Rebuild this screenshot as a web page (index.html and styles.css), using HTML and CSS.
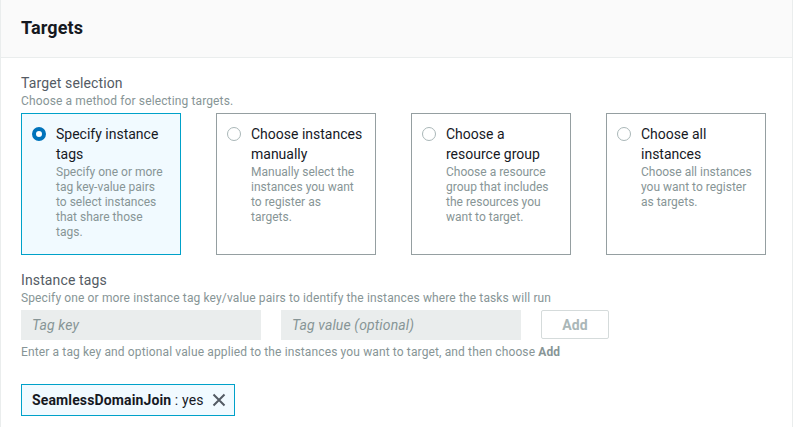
FILE: index.html
```html
<!DOCTYPE html>
<html lang="en">
<head>
<meta charset="utf-8">
<title>Targets</title>
<link rel="stylesheet" href="styles.css">
</head>
<body>
<div class="card">
  <div class="card-header"><h2 class="card-title">Targets</h2></div>
  <div class="card-body">
    <div class="field">
      <div class="label">Target selection</div>
      <div class="hint">Choose a method for selecting targets.</div>
      <div class="tiles">
        <div class="tile tile-selected">
          <span class="radio radio-on"></span>
          <div class="tile-text">
            <div class="tile-title">Specify instance tags</div>
            <div class="tile-desc">Specify one or more tag key-value pairs to select instances that share those tags.</div>
          </div>
        </div>
        <div class="tile">
          <span class="radio"></span>
          <div class="tile-text">
            <div class="tile-title">Choose instances manually</div>
            <div class="tile-desc">Manually select the instances you want to register as targets.</div>
          </div>
        </div>
        <div class="tile">
          <span class="radio"></span>
          <div class="tile-text">
            <div class="tile-title">Choose a resource group</div>
            <div class="tile-desc">Choose a resource group that includes the resources you want to target.</div>
          </div>
        </div>
        <div class="tile">
          <span class="radio"></span>
          <div class="tile-text">
            <div class="tile-title">Choose all instances</div>
            <div class="tile-desc">Choose all instances you want to register as targets.</div>
          </div>
        </div>
      </div>
    </div>
    <div class="field field-tags">
      <div class="label">Instance tags</div>
      <div class="hint">Specify one or more instance tag key/value pairs to identify the instances where the tasks will run</div>
      <div class="tag-row">
        <input class="input" type="text" placeholder="Tag key">
        <input class="input" type="text" placeholder="Tag value (optional)">
        <button class="btn" type="button">Add</button>
      </div>
      <div class="hint hint-after">Enter a tag key and optional value applied to the instances you want to target, and then choose <b>Add</b></div>
      <div class="tokens">
        <div class="token">
          <span class="token-text"><b>SeamlessDomainJoin</b> : yes</span>
          <svg class="token-x" width="14" height="14" viewBox="0 0 14 14" aria-hidden="true"><path d="M1.5 1.5 L12.5 12.5 M12.5 1.5 L1.5 12.5" stroke="#545b64" stroke-width="2" fill="none"/></svg>
        </div>
      </div>
    </div>
  </div>
</div>
</body>
</html>
```
FILE: styles.css
```css
* { box-sizing: border-box; }
html, body { margin: 0; padding: 0; background: #fff; }
body {
  font-family: Roboto, "Liberation Sans", Arial, sans-serif;
  letter-spacing: 0.13px;
  color: #16191f;
  width: 793px;
  height: 427px;
  overflow: hidden;
}
.card {
  border-left: 1px solid #eaeded;
  border-right: 1px solid #eaeded;
  min-height: 427px;
}
.card-header {
  background: #fafafa;
  border-bottom: 1px solid #eaeded;
  height: 58px;
  padding: 17px 20px 0;
}
.card-title {
  margin: 0;
  font-size: 18px;
  line-height: 22px;
  font-weight: 700;
  color: #16191f;
}
.card-body {
  padding: 15px 20px 0;
}
.label {
  font-size: 14px;
  line-height: 20px;
  color: #545b64;
}
.hint {
  font-size: 12px;
  line-height: 16px;
  color: #879596;
}
.hint b { font-weight: 700; color: #879596; }
.tiles {
  display: flex;
  gap: 35px;
  margin-top: 4px;
}
.tile {
  width: 160px;
  height: 142px;
  border: 1px solid #959fa1;
  padding: 10px 12px 10px 10px;
  display: flex;
  align-items: flex-start;
  gap: 10px;
  background: #fff;
  letter-spacing: 0;
}
.tile-selected {
  border-color: #00a1c9;
  background: #f1faff;
}
.radio {
  flex: 0 0 14px;
  width: 14px;
  height: 14px;
  border-radius: 50%;
  border: 1px solid #aab7b8;
  background: #fff;
  margin-top: 3px;
}
.radio-on {
  border: 4px solid #0073bb;
}
.tile-text { flex: 1; min-width: 0; }
.tile-title {
  font-size: 14px;
  line-height: 20px;
  color: #16191f;
}
.tile-desc {
  font-size: 12px;
  line-height: 15px;
  color: #879596;
  margin-top: 1px;
}
.field-tags { margin-top: 15px; }
.tag-row {
  display: flex;
  gap: 20px;
  margin-top: 4px;
}
.input {
  width: 240px;
  height: 30px;
  border: none;
  background: #eaeded;
  padding: 0 11px;
  font-family: inherit;
  letter-spacing: inherit;
  font-size: 14px;
  color: #16191f;
  outline: none;
}
.input::placeholder {
  color: #879596;
  font-style: italic;
}
.btn {
  width: 68px;
  height: 29px;
  background: #fff;
  border: 1px solid #d5dbdb;
  border-radius: 2px;
  font-family: inherit;
  letter-spacing: inherit;
  font-size: 14px;
  font-weight: 700;
  color: #aab7b8;
  padding: 0;
}
.hint-after { margin-top: 4px; }
.tokens {
  display: flex;
  margin-top: 24px;
}
.token {
  display: flex;
  align-items: center;
  height: 32px;
  border: 1px solid #00a1c9;
  background: #f1faff;
  padding: 0 8px 0 10px;
  gap: 8px;
}
.token-text {
  font-size: 14px;
  line-height: 20px;
  color: #16191f;
}
.token-text b { font-weight: 700; }
.token-x { display: block; }
```
